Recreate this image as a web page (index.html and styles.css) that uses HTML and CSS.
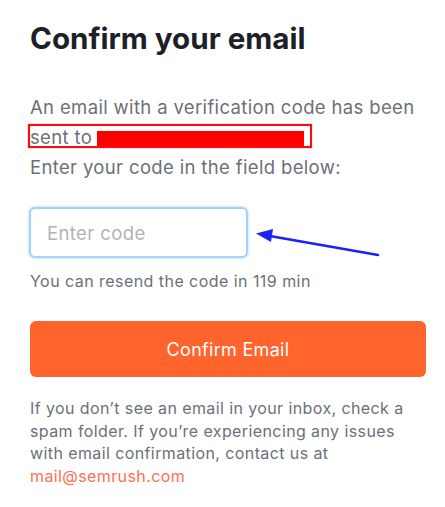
FILE: index.html
```html
<!DOCTYPE html>
<html lang="en">
<head>
<meta charset="utf-8">
<title>Confirm your email</title>
<link rel="stylesheet" href="styles.css">
</head>
<body>
<main class="card">
  <h1 class="title">Confirm your email</h1>
  <p class="lead">
    <span class="line">An email with a verification code has been</span>
    <span class="line sent">sent to <span class="redact"></span></span>
    <span class="line">Enter your code in the field below:</span>
    <span class="annot-box"></span>
  </p>
  <div class="field-row">
    <input class="code-input" type="text" placeholder="Enter code">
    <svg class="arrow" width="130" height="30" viewBox="0 0 130 30" aria-hidden="true">
      <line x1="12" y1="6.5" x2="123" y2="26" stroke="#1a22f5" stroke-width="2.6" stroke-linecap="round"/>
      <polygon points="1,4.5 18,0 16,13" fill="#1a22f5"/>
    </svg>
  </div>
  <p class="resend">You can resend the code in 119 min</p>
  <button class="confirm-btn" type="button">Confirm Email</button>
  <p class="help">If you don’t see an email in your inbox, check a spam folder. If you’re experiencing any issues with email confirmation, contact us at <a class="mail" href="#">mail@semrush.com</a></p>
</main>
</body>
</html>
```

FILE: styles.css
```css
* { box-sizing: border-box; }
html, body { margin: 0; padding: 0; background: #fff; }
body {
  font-family: Inter, "Noto Sans", "Liberation Sans", sans-serif;
  width: 445px;
  height: 507px;
  overflow: hidden;
}
.card {
  padding: 21px 19px 0 30px;
}
.title {
  margin: 0;
  font-size: 29.6px;
  line-height: 35px;
  font-weight: 700;
  color: #1d2127;
  letter-spacing: 0;
}
.lead {
  position: relative;
  margin: 36px 0 0;
  font-size: 18.5px;
  letter-spacing: 0.35px;
  line-height: 30px;
  color: #6b7079;
}
.line { display: block; white-space: nowrap; }
.redact {
  display: inline-block;
  width: 207px;
  height: 16px;
  margin-left: -1px;
  background: #ff0000;
  vertical-align: -3px;
}
.annot-box {
  position: absolute;
  left: -2px;
  top: 32px;
  width: 284px;
  height: 24px;
  border: 2px solid #ff0a0a;
  box-shadow: 0 0 1px #ff6060;
}
.field-row {
  position: relative;
  margin-top: 25px;
}
.code-input {
  display: block;
  width: 219px;
  height: 51px;
  margin-left: -1px;
  padding: 0 16px;
  border: 2px solid #a5d2f6;
  border-radius: 6px;
  box-shadow: 0 0 2px 1px #d3e9fb;
  font-family: inherit;
  font-size: 18.5px;
  letter-spacing: 0.4px;
  color: #333;
  outline: none;
  background: #fff;
}
.code-input::placeholder { color: #b3b3b3; }
.arrow {
  position: absolute;
  left: 225px;
  top: 22px;
}
.resend {
  margin: 12px 0 0;
  font-size: 16px;
  letter-spacing: 0.45px;
  line-height: 22px;
  color: #6b7079;
}
.confirm-btn {
  display: block;
  width: 396px;
  height: 56px;
  margin-top: 29px;
  border: 0;
  border-radius: 6px;
  background: #ff642d;
  color: #fff;
  font-family: inherit;
  font-size: 18px;
  letter-spacing: 0.3px;
  font-weight: 400;
  cursor: pointer;
}
.help {
  margin: 20px 0 0;
  font-size: 16px;
  letter-spacing: 0.4px;
  line-height: 22.5px;
  color: #6b7079;
}
.mail {
  color: #ff6f52;
  text-decoration: none;
}
```
